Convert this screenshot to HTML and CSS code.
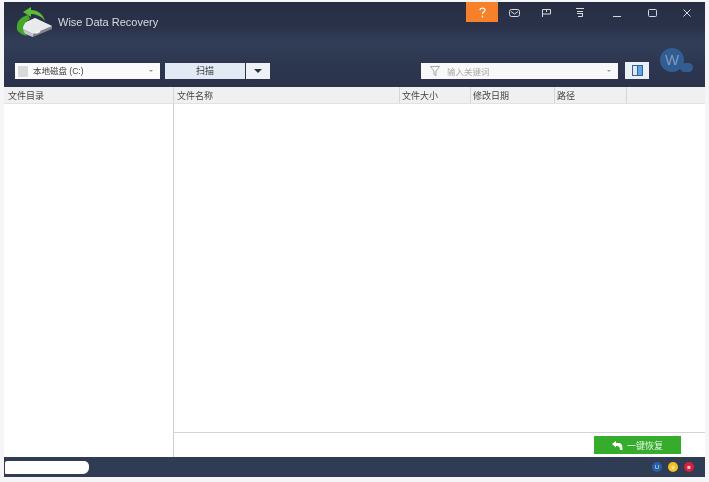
FILE: index.html
```html
<html>
<head>
<meta charset="utf-8">
<title>Wise Data Recovery</title>
<link rel="stylesheet" href="styles.css">
</head>
<body>
<div class="window">
    <div class="header">
        <div class="titlebar">
            <div class="brand">
                <svg class="logo" width="38" height="30" viewBox="0 0 38 30">
                    <path d="M2 19 L20 11 L37 19 L37 22 L18 30 L3 24 Z" fill="#7f868e"/>
                    <path d="M2 19 L20 11 L37 19 L18 27 Z" fill="#e8eaec"/>
                    <path d="M3 20 L18 27 L18 30 L3 24 Z" fill="#c3c7cc"/>
                    <rect x="20" y="25.5" width="5" height="1.6" fill="#f4f4f4" transform="rotate(-22 20 25)"/>
                    <path d="M30 14 C28 7 23 3 16 3 L16 0 L8 5 L16 10 L16 7 C21 7 26 9 30 14 Z" fill="#5dbb3a"/>
                    <path d="M13 8 C6 10 2 14 2 19 C1 23 4 27 12 29 C8 25 7 21 9 18 C10 15 13 13 15 12 Z" fill="#45a82c"/>
                </svg>
                <span class="app-name">Wise Data Recovery</span>
            </div>
            <div class="win-buttons">
                <div class="win-btn active">
                    <svg width="7" height="11" viewBox="0 0 7 11" fill="none" stroke="#fff" stroke-width="1.2"><path d="M1 3 C1 0.5 6 0.5 6 3 C6 5 3.5 5 3.5 7"/><path d="M3.5 8.5 V10.5"/></svg>
                </div>
                <div class="win-btn">
                    <svg width="11" height="8" viewBox="0 0 11 8" fill="none" stroke="#d5d9e0"><rect x="0.5" y="0.5" width="10" height="7" rx="2"/><path d="M2 2.5 L5.5 5 L9 2.5"/></svg>
                </div>
                <div class="win-btn">
                    <svg width="9" height="8" viewBox="0 0 9 8" fill="none" stroke="#d5d9e0"><path d="M0.5 8 V0.5 H8.5 V5 H0.5"/><path d="M4.5 0.5 V3"/></svg>
                </div>
                <div class="win-btn btn-36">
                    <svg width="8" height="9" viewBox="0 0 8 9" fill="none" stroke="#d5d9e0"><path d="M0 0.5 H8 M1 3.5 H7 M1 5.5 H7 M6.5 5.5 V8.5 H2"/></svg>
                </div>
                <div class="win-btn btn-38">
                    <svg width="8" height="8" viewBox="0 0 8 8" fill="none" stroke="#d5d9e0"><path d="M0 7.5 H8"/></svg>
                </div>
                <div class="win-btn">
                    <svg width="9" height="8" viewBox="0 0 9 8" fill="none" stroke="#d5d9e0"><rect x="0.5" y="0.5" width="8" height="7" rx="1"/></svg>
                </div>
                <div class="win-btn btn-last">
                    <svg width="8" height="8" viewBox="0 0 8 8" fill="none" stroke="#d5d9e0"><path d="M0.5 0.5 L7.5 7.5 M7.5 0.5 L0.5 7.5"/></svg>
                </div>
            </div>
        </div>
        <div class="toolbar">
            <div class="drive-select">
                <span class="drive-icon"></span>
                <span class="drive-label">本地磁盘 (C:)</span>
                <span class="caret"></span>
            </div>
            <div class="scan-btn">扫描</div>
            <div class="scan-more"><span class="caret-big"></span></div>
            <div class="filter-box">
                <svg width="10" height="10" viewBox="0 0 10 10" fill="none" stroke="#a4a8ae"><path d="M0.5 0.5 H9.5 L6 5 V9.5 L4 8.5 V5 Z"/></svg>
                <span class="filter-text">输入关键词</span>
                <span class="caret"></span>
            </div>
            <div class="view-btn">
                <span class="view-left"></span><span class="view-right"></span>
            </div>
            <div class="avatar">W<span class="avatar-dot"></span></div>
        </div>
    </div>

    <div class="columns">
        <div class="col col-tree">文件目录</div>
        <div class="col col-name">文件名称</div>
        <div class="col col-size">文件大小</div>
        <div class="col col-date">修改日期</div>
        <div class="col col-path">路径</div>
        <div class="col col-rest"></div>
    </div>

    <div class="main">
        <div class="tree"></div>
        <div class="files">
            <div class="file-list"></div>
            <div class="actions">
                <div class="recover-btn">
                    <svg width="11" height="9" viewBox="0 0 11 9" fill="#fff"><path d="M0 3 L4 0 V2 H7 C9.5 2 10.5 4 10.5 9 H8 C8 6.5 7 5 5 5 H4 V6.5 Z"/></svg>
                    <span>一键恢复</span>
                </div>
            </div>
        </div>
    </div>

    <div class="statusbar">
        <div class="redacted"></div>
        <div class="social">
            <span class="dot blue">U</span>
            <span class="dot yellow">★</span>
            <span class="dot red">■</span>
        </div>
    </div>
</div>
</body>
</html>
```

FILE: styles.css
```css
body {
    margin: 0;
    background: #f5f5f7;
    font-family: "Liberation Sans", "Noto Sans CJK SC", sans-serif;
    font-size: 9px;
    color: #333;
}

.window {
    display: flex;
    flex-direction: column;
    width: 701px;
    height: 475px;
    margin: 2px 4px 5px;
    background: #fff;
    filter: blur(0.7px);
}

.header {
    height: 85px;
    display: flex;
    flex-direction: column;
    background: linear-gradient(#272e44 0, #2a3249 25px, #323e58 40px, #2d3750 60px, #2b334b 85px);
}

.titlebar {
    display: flex;
    justify-content: space-between;
    height: 40px;
}

.brand {
    display: flex;
    align-items: center;
    gap: 5px;
    padding: 3px 0 0 11px;
    height: 34px;
}

.app-name {
    color: #d8dbe0;
    font-size: 11px;
}

.win-buttons {
    display: flex;
    height: 20px;
}

.win-btn {
    width: 32px;
    padding-top: 1px;
    box-sizing: border-box;
    display: flex;
    align-items: center;
    justify-content: center;
}

.win-btn.active {
    background: #f6812a;
}

.btn-36 { width: 36px; }
.btn-38 { width: 38px; }
.btn-last { width: 37px; }

.toolbar {
    display: flex;
    align-items: flex-start;
    padding-left: 11px;
    height: 45px;
}

.drive-select {
    display: flex;
    align-items: center;
    width: 145px;
    height: 16px;
    margin-top: 21px;
    background: #fbfbfb;
    box-sizing: border-box;
    padding: 0 7px 0 3px;
}

.drive-icon {
    width: 10px;
    height: 11px;
    background: #d8d9db;
    border-radius: 1px;
    margin-right: 5px;
}

.drive-label {
    flex-grow: 1;
    font-size: 8.5px;
    color: #444;
    padding-bottom: 2px;
}

.caret {
    width: 0;
    height: 0;
    border-left: 2.5px solid transparent;
    border-right: 2.5px solid transparent;
    border-top: 2.5px solid #9a9a9a;
}

.scan-btn {
    width: 80px;
    height: 16px;
    margin: 21px 0 0 5px;
    background: #e2eaf3;
    color: #333;
    text-align: center;
    line-height: 16px;
    font-size: 9px;
}

.scan-more {
    display: flex;
    align-items: center;
    justify-content: center;
    width: 24px;
    height: 16px;
    margin: 21px 0 0 1px;
    background: #eef1f5;
}

.caret-big {
    width: 0;
    height: 0;
    border-left: 4px solid transparent;
    border-right: 4px solid transparent;
    border-top: 4px solid #2b3349;
}

.filter-box {
    display: flex;
    align-items: center;
    gap: 7px;
    width: 197px;
    height: 16px;
    margin: 21px 0 0 151px;
    box-sizing: border-box;
    padding: 0 7px 0 9px;
    background: #f8f8f8;
}

.filter-text {
    flex-grow: 1;
    color: #a8a8a8;
    font-size: 8.5px;
    padding-bottom: 1px;
}

.view-btn {
    display: flex;
    align-items: center;
    justify-content: center;
    width: 24px;
    height: 17px;
    margin: 20px 0 0 7px;
    background: #eaf0f7;
}

.view-left {
    width: 4px;
    height: 9px;
    border: 1px solid #3a5f92;
    background: #dfe8f1;
}

.view-right {
    width: 4px;
    height: 9px;
    border: 1px solid #3a5f92;
    border-left: 0;
    background: #5aa6e6;
}

.avatar {
    position: relative;
    width: 24px;
    height: 24px;
    margin: 6px 0 0 11px;
    border-radius: 50%;
    background: #315d93;
    color: #7f9bbe;
    font-size: 15px;
    line-height: 24px;
    text-align: center;
}

.avatar-dot {
    position: absolute;
    right: -9px;
    bottom: 0;
    width: 13px;
    height: 9px;
    border-radius: 5px;
    background: #315d93;
}

.columns {
    display: flex;
    height: 17px;
    background: #f0f0f1;
    border-bottom: 1px solid #e2e2e4;
    box-sizing: border-box;
    line-height: 18px;
}

.col {
    box-sizing: border-box;
    padding-left: 2px;
    border-right: 1px solid #d6d6d8;
    font-size: 9px;
    color: #444;
}

.col-tree { width: 170px; padding-left: 4px; }
.col-name { width: 226px; padding-left: 3px; }
.col-size { width: 71px; }
.col-date { width: 84px; }
.col-path { width: 72px; }
.col-rest { flex-grow: 1; border-right: 0; }

.main {
    display: flex;
    flex-grow: 1;
    min-height: 0;
}

.tree {
    width: 170px;
    box-sizing: border-box;
    border-right: 1px solid #cfcfd1;
    background: #fff;
}

.files {
    flex-grow: 1;
    display: flex;
    flex-direction: column;
}

.file-list {
    flex-grow: 1;
}

.actions {
    display: flex;
    justify-content: flex-end;
    height: 25px;
    padding: 3px 24px 0 0;
    box-sizing: border-box;
    border-top: 1px solid #d4d4d6;
}

.recover-btn {
    display: flex;
    align-items: center;
    justify-content: center;
    gap: 4px;
    width: 87px;
    height: 18px;
    background: #36ac2c;
    color: #e6f5e3;
    font-size: 9px;
}

.statusbar {
    display: flex;
    align-items: center;
    justify-content: space-between;
    height: 20px;
    background: #303b54;
}

.redacted {
    width: 84px;
    height: 13px;
    margin-left: 1px;
    background: #fff;
    border-radius: 2px 5px 6px 1px;
}

.social {
    display: flex;
    gap: 6px;
    padding-right: 11px;
}

.dot {
    width: 10px;
    height: 10px;
    border-radius: 50%;
    color: #e8edf3;
    font-size: 6px;
    line-height: 10px;
    text-align: center;
}

.blue { background: #2a5fa3; }
.yellow { background: #f4c021; color: #fbe9a8; }
.red { background: #d6203e; color: #f6c3cb; }
```
